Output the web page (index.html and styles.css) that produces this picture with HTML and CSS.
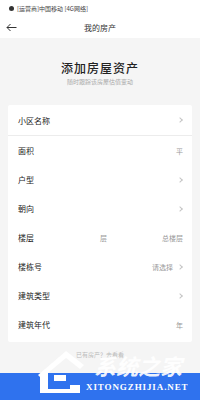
FILE: index.html
```html
<!DOCTYPE html>
<html lang="zh">
<head>
<meta charset="utf-8">
<link rel="stylesheet" href="styles.css">
</head>
<body>
<div class="page">
  <div class="status">
    <span class="dot"></span>
    <span>[运营商]中国移动 [4G网络]</span>
  </div>
  <div class="header">
    <svg class="back" width="11" height="9" viewBox="0 0 11 9"><path d="M10.5 4.5H1M4.5 1L1 4.5L4.5 8" fill="none" stroke="#333" stroke-width="1"/></svg>
    <div class="title">我的房产</div>
  </div>
  <div class="hero">
    <div class="h1">添加房屋资产</div>
    <div class="sub">随时跟踪该房屋估值变动</div>
  </div>
  <div class="card">
    <div class="row first"><span class="label">小区名称</span><span class="chev"></span></div>
    <div class="row"><span class="label">面积</span><span class="unit">平</span></div>
    <div class="row"><span class="label">户型</span><span class="chev"></span></div>
    <div class="row"><span class="label">朝向</span><span class="chev"></span></div>
    <div class="row"><span class="label">楼层</span><span class="floor"><span class="unit">层</span><span class="unit">总楼层</span></span></div>
    <div class="row"><span class="label">楼栋号</span><span class="pick"><span class="unit">请选择</span><span class="chev"></span></span></div>
    <div class="row"><span class="label">建筑类型</span><span class="chev"></span></div>
    <div class="row"><span class="label">建筑年代</span><span class="unit">年</span></div>
  </div>
  <div class="foot">已有房产？去看看</div>
  <div class="wm">
    <div class="band"></div>
    <svg class="logo" width="64" height="52" viewBox="0 0 64 52"><path d="M2 30L30 6L48 20L44 24L30 13L12 28L12 44L34 44L34 40L44 40L44 48L4 48L4 32Z" fill="#fff"/><path d="M18 30H30V36H18Z" fill="#fff"/></svg>
    <div class="wm-cn">系统之家</div>
    <div class="wm-en">XITONGZHIJIA.NET</div>
  </div>
</div>
</body>
</html>
```
FILE: styles.css
```css
* { box-sizing: border-box; }
html, body { margin: 0; padding: 0; }
body {
  width: 200px;
  height: 400px;
  overflow: hidden;
  background: #f5f5f5;
  font-family: "Noto Sans CJK SC", "Noto Sans", sans-serif;
  color: #333;
}
.page { position: relative; width: 200px; height: 400px; }
.status {
  height: 16px;
  background: #fff;
  display: flex;
  align-items: center;
  gap: 3px;
  padding-left: 9px;
  font-size: 6px;
  color: #444;
}
.dot { width: 5px; height: 5px; border-radius: 50%; background: #333; }
.header {
  height: 22px;
  background: #fff;
  display: flex;
  align-items: center;
  justify-content: center;
  position: relative;
}
.back { position: absolute; left: 6px; top: 7px; }
.title { font-size: 8px; color: #333; }
.hero {
  padding-top: 23px;
  height: 67px;
  text-align: center;
}
.h1 { font-size: 12px; line-height: 14px; color: #222; font-weight: 500; letter-spacing: 1px; }
.sub { font-size: 6px; line-height: 9px; color: #aaa; margin-top: 2px; }
.card {
  margin: 0 8px;
  background: #fff;
  border-radius: 2px;
  padding-bottom: 3px;
}
.row {
  height: 29px;
  display: flex;
  align-items: center;
  justify-content: space-between;
  padding: 0 9px 0 10px;
}
.row.first { height: 31px; border-bottom: 1px solid #ececec; }
.label { font-size: 8px; color: #222; }
.unit { font-size: 7px; color: #999; }
.chev {
  width: 4px;
  height: 4px;
  border-top: 1px solid #c4c4c4;
  border-right: 1px solid #c4c4c4;
  transform: rotate(45deg);
  margin-right: 1px;
}
.floor { display: flex; gap: 0; width: 83px; justify-content: space-between; }
.pick { display: flex; align-items: center; gap: 5px; }
.foot {
  margin-top: 8px;
  text-align: center;
  font-size: 6px;
  color: #bbb;
}
.wm { position: absolute; left: 0; top: 0; width: 200px; height: 400px; pointer-events: none; }
.band { position: absolute; left: 0; top: 373px; width: 200px; height: 27px; background: #2f72ee; }
.logo { position: absolute; left: 36px; top: 345px; }
.wm-cn {
  position: absolute;
  left: 94px;
  top: 354px;
  font-size: 22px;
  line-height: 22px;
  font-weight: 700;
  font-style: italic;
  color: rgba(255,255,255,0.92);
  letter-spacing: 0;
}
.wm-en {
  position: absolute;
  left: 86px;
  top: 382px;
  font-family: "Liberation Serif", serif;
  font-size: 9px;
  line-height: 10px;
  font-weight: 700;
  color: #fff;
  letter-spacing: 0.9px;
}
```
